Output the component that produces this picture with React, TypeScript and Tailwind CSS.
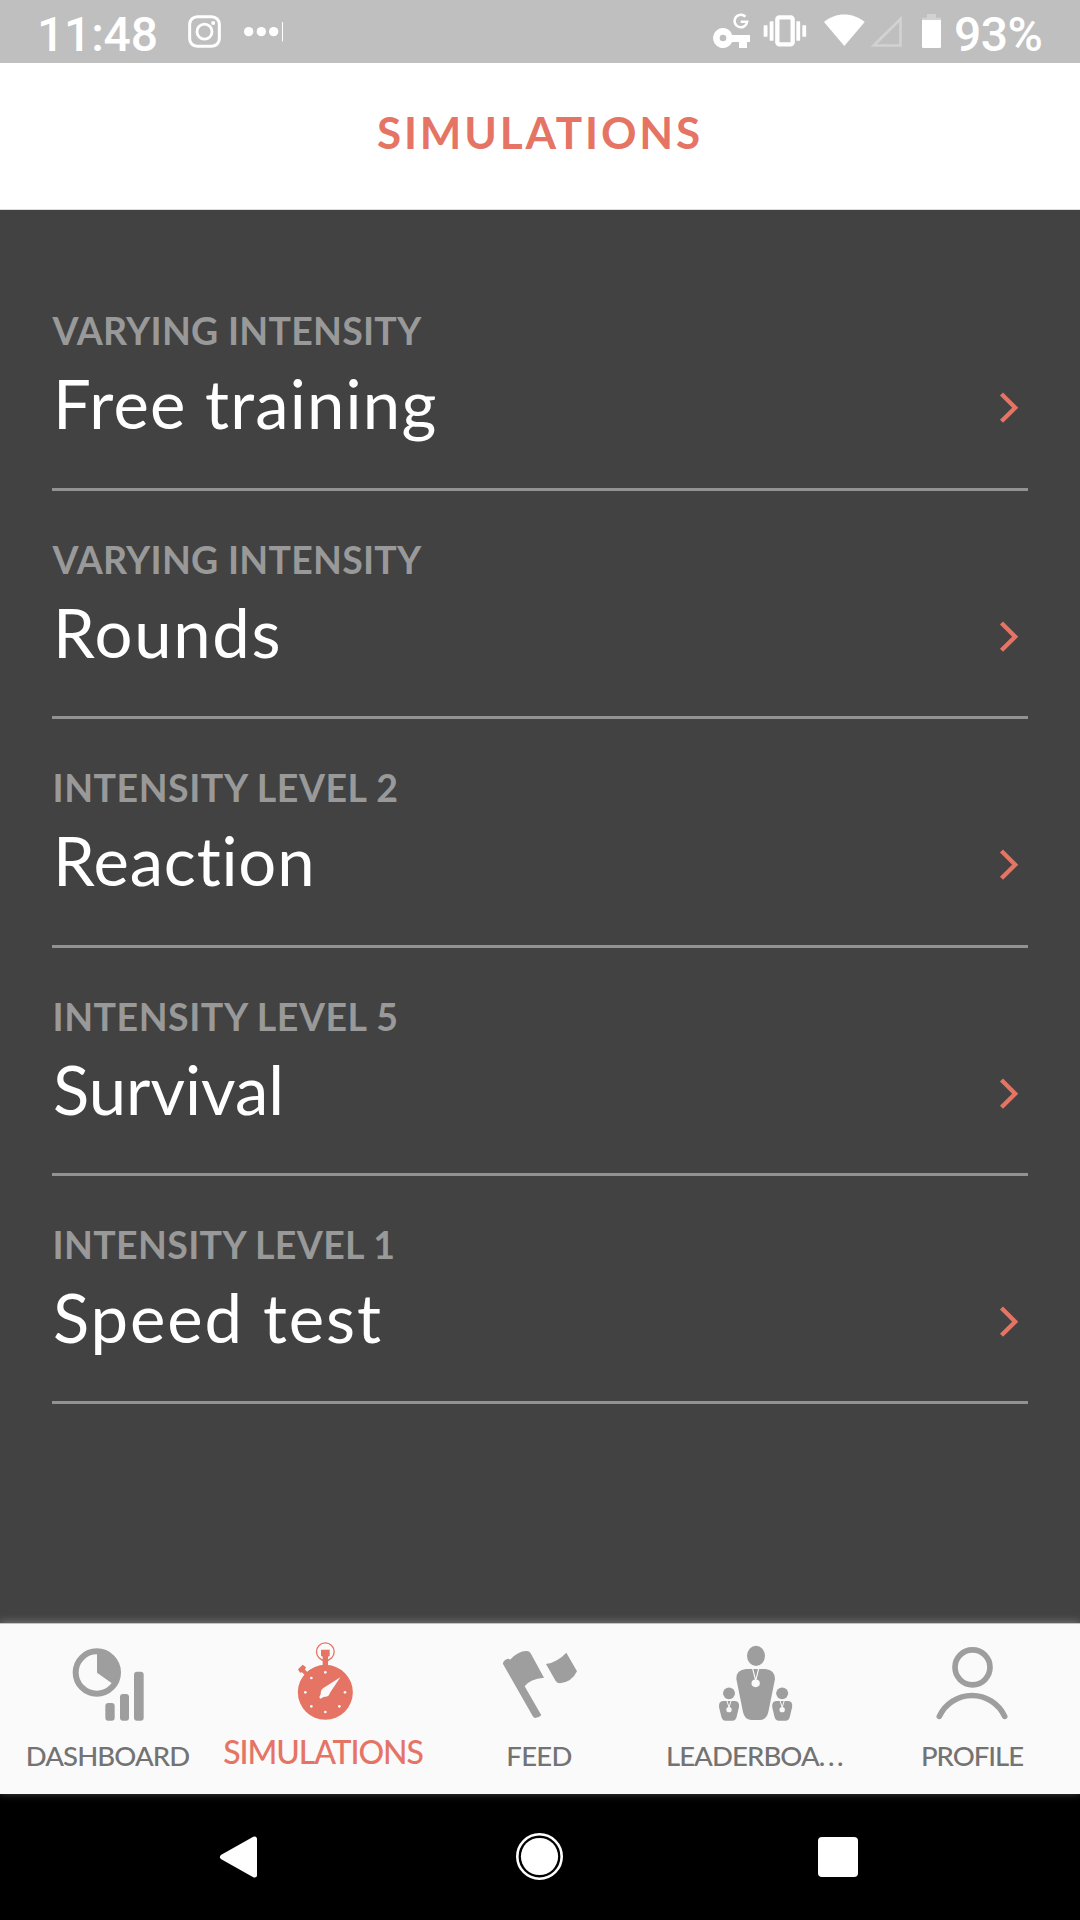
import type { ReactNode } from 'react'

type Simulation = {
  level: string
  levelClass: string
  name: string
  nameClass: string
}

const simulations: Simulation[] = [
  { level: 'VARYING INTENSITY', levelClass: 'tracking-[0.25px]', name: 'Free training', nameClass: 'tracking-[1.2px]' },
  { level: 'VARYING INTENSITY', levelClass: 'tracking-[0.25px]', name: 'Rounds', nameClass: 'tracking-[1.7px]' },
  { level: 'INTENSITY LEVEL 2', levelClass: 'tracking-[0.53px]', name: 'Reaction', nameClass: 'tracking-[0.8px]' },
  { level: 'INTENSITY LEVEL 5', levelClass: 'tracking-[0.53px]', name: 'Survival', nameClass: 'tracking-[0px]' },
  { level: 'INTENSITY LEVEL 1', levelClass: 'tracking-[0.35px]', name: 'Speed test', nameClass: 'tracking-[1.9px]' },
]

function StatusBar() {
  return (
    <div className="flex h-[63px] items-start bg-[#bfbfbf] font-['Roboto',sans-serif] text-white">
      <span className="ml-[37px] mt-[7px] w-[151px] text-[48px] leading-[56px] font-medium tracking-[-0.2px]">11:48</span>
      {/* instagram */}
      <svg className="mt-[15px] h-[33px] w-[33px]" viewBox="0 0 99 99" fill="none" stroke="currentColor">
        <rect x="5" y="5" width="89" height="89" rx="23" strokeWidth="9" />
        <circle cx="49.5" cy="50" r="22.5" strokeWidth="8.5" />
        <circle cx="75.5" cy="24" r="6" fill="currentColor" stroke="none" />
      </svg>
      {/* more notifications */}
      <svg className="mt-[20px] ml-[21px] h-[24px] w-[44px]" viewBox="0 0 132 72" fill="currentColor">
        <circle cx="20" cy="35" r="14" />
        <circle cx="58" cy="35" r="14" />
        <circle cx="95" cy="35" r="14" />
        <rect x="120" y="6" width="3" height="58" />
      </svg>
      {/* vpn key */}
      <svg className="mt-[11px] ml-[425px] h-[40px] w-[42px]" viewBox="93 33 126 120" fill="currentColor">
        <path
          fillRule="evenodd"
          d="M129 84a30 30 0 1 0 27.500 42H177v18h24v-18h9v-21h-53.500A30 30 0 0 0 129 84zm0 20a10 10 0 1 1 0 20 10 10 0 0 1 0-20z"
        />
        <path d="M196.500 50A19 19 0 1 0 201.500 65H182" fill="none" stroke="currentColor" strokeWidth="7.500" />
      </svg>
      {/* vibrate */}
      <svg className="mt-[11px] ml-[8px] h-[40px] w-[47px]" viewBox="243 33 141 120" fill="currentColor">
        <rect x="251" y="76" width="11.500" height="34" rx="1" />
        <rect x="269" y="64" width="11.500" height="58" rx="1" />
        <rect x="349" y="64" width="11.500" height="58" rx="1" />
        <rect x="367" y="76" width="11.500" height="34" rx="1" />
        <rect x="292" y="52" width="46" height="81" rx="6" fill="none" stroke="currentColor" strokeWidth="13" />
      </svg>
      {/* wifi */}
      <svg className="mt-[11px] ml-[15px] h-[40px] w-[42px]" viewBox="429 33 126 120" fill="currentColor">
        <path d="M432 66C466 36 519 36 554 66L493 138z" />
      </svg>
      {/* mobile signal */}
      <svg className="mt-[11px] ml-[4px] h-[40px] w-[34px]" viewBox="567 33 102 120" fill="none" stroke="#d2d2d2" strokeWidth="8">
        <path d="M581 136.500L661.500 57V136.500z" />
      </svg>
      {/* battery */}
      <svg className="mt-[11px] ml-[18px] h-[40px] w-[22px]" viewBox="723 33 66 120">
        <path d="M741 42h27v11h15v8h-57v-8h15z" fill="#d2d2d2" />
        <path d="M726 60h57v80q0 4-4 4h-49q-4 0-4-4z" fill="#fff" />
      </svg>
      <span className="ml-[11px] mt-[7px] text-[48px] leading-[56px] font-medium tracking-[-0.5px]">93%</span>
    </div>
  )
}

function SimulationRow({ item }: { item: Simulation }) {
  return (
    <li className="flex h-[228.4px] items-start justify-between border-b-3 border-[#929292]">
      <div className="flex flex-col">
        <span className={`mt-[45px] ml-[0.500px] text-[37.500px] leading-[48px] font-bold whitespace-nowrap text-[#999999] ${item.levelClass}`}>
          {item.level}
        </span>
        <span className={`mt-[8px] ml-[1px] text-[67px] leading-[80px] whitespace-nowrap text-white ${item.nameClass}`}>
          {item.name}
        </span>
      </div>
      <svg className="mt-[128px] mr-[6px] h-[36px] w-[26px]" viewBox="0 0 78 108" fill="none" stroke="#e57465" strokeWidth="13">
        <path d="M16.500 12L57.500 53L16.500 94" />
      </svg>
    </li>
  )
}

// Icons are drawn on a 264 unit grid
function TabIcon({ viewBox, children }: { viewBox: string; children: ReactNode }) {
  return (
    <svg className="mt-[12px] h-[88px] w-[88px] shrink-0" viewBox={viewBox} fill="#9e9e9e">
      {children}
    </svg>
  )
}

function MedalPerson() {
  return (
    <>
      <ellipse cx="237" cy="250" rx="18" ry="17.500" />
      <path d="M219 273H255Q269 273 267 291L260 320Q257 332 247 332H227Q217 332 214 320L207 291Q206 273 219 273z" />
      <path d="M231 273L237 292L243 273" fill="none" stroke="#fafafa" strokeWidth="3" />
      <circle cx="237" cy="299" r="8" fill="#fafafa" />
    </>
  )
}

function Tab({ label, labelClass, children }: { label: ReactNode; labelClass: string; children: ReactNode }) {
  return (
    <div className="flex w-[216px] flex-col items-center">
      {children}
      <span className={`font-medium whitespace-nowrap ${labelClass}`}>{label}</span>
    </div>
  )
}

function TabBar() {
  return (
    <div className="relative flex h-[171px] border-t border-[#c4c4c4] bg-[#fafafa] shadow-[0_-1px_8px_rgba(190,190,190,0.45)]">
      <Tab label="DASHBOARD" labelClass="mt-[14px] mr-[1px] text-[27.500px] leading-[36px] text-[#737373] tracking-[-0.9px]">
        <TabIcon viewBox="192 78 264 264">
          <circle cx="290.500" cy="187.500" r="63.500" fill="none" stroke="#9e9e9e" strokeWidth="18" />
          <path d="M291 188V125A63 63 0 0 1 342 224z" />
          <rect x="316" y="279" width="28" height="53" rx="9" />
          <rect x="360" y="252" width="27" height="80" rx="9" />
          <rect x="402" y="185" width="29" height="147" rx="9" />
        </TabIcon>
      </Tab>
      <Tab label="SIMULATIONS" labelClass="mt-[8px] mr-[2px] text-[32px] leading-[40px] text-[#e57465] tracking-[-1.1px]">
        <TabIcon viewBox="210 78 264 264">
          <g fill="#e57465">
            <circle cx="346" cy="247" r="82.500" />
            <circle cx="346" cy="125" r="26.500" fill="none" stroke="#e57465" strokeWidth="4" />
            <path d="M333 119H359V137L354 140V168H338V140L333 137z" />
            <path d="M264 178L278 164L288 172L285 179L296 190L287 198L276 187L270 188z" />
          </g>
          <g fill="#fafafa">
            <path d="M391 202L357 253L331 266L328 262L339 235z" />
            <circle cx="346" cy="247" r="13.500" />
            <circle cx="346" cy="187" r="4" />
            <circle cx="304" cy="204" r="4" />
            <circle cx="286" cy="247" r="4" />
            <circle cx="304" cy="289" r="4" />
            <circle cx="346" cy="306" r="4" />
            <circle cx="388" cy="289" r="4" />
            <circle cx="405" cy="247" r="4" />
          </g>
        </TabIcon>
      </Tab>
      <Tab label="FEED" labelClass="mt-[14px] mr-[2px] text-[27.500px] leading-[36px] text-[#737373] tracking-[-0.7px]">
        <TabIcon viewBox="78 78 264 264">
          <path d="M99 162Q98 152 112 147Q117 145 120 149Q146 122 170 123Q178 123 182 130L222 203Q180 206 164 229L214 316Q206 324 195 324Q191 323 188 318z" />
          <path d="M228 162Q262 157 289 128L321 184Q306 216 270 220Q262 220 257 213z" />
        </TabIcon>
      </Tab>
      <Tab
        label={
          <>
            LEADERBOA<span className="tracking-[2.6px]">...</span>
          </>
        }
        labelClass="mt-[14px] text-[27.500px] leading-[36px] text-[#737373] tracking-[-0.9px]"
      >
        <TabIcon viewBox="186 78 264 264">
          <ellipse cx="318" cy="137.500" rx="27" ry="30.500" />
          <path d="M288 177H346Q375 180 375 207L355 306Q350 329 330 330H303Q284 329 279 306L259 207Q258 180 288 177z" />
          <path d="M308 176L317 212L326 176" fill="none" stroke="#fafafa" strokeWidth="3.500" />
          <ellipse cx="317" cy="220" rx="12.500" ry="11.500" fill="#fafafa" />
          <MedalPerson />
          <g transform="translate(159.500 0)">
            <MedalPerson />
          </g>
        </TabIcon>
      </Tab>
      <Tab label="PROFILE" labelClass="mt-[14px] text-[27.500px] leading-[36px] text-[#737373] tracking-[-1px]">
        <TabIcon viewBox="114 78 264 264">
          <g fill="none" stroke="#9e9e9e" strokeWidth="17" strokeLinecap="round">
            <circle cx="247.500" cy="172" r="52.500" />
            <path d="M148 319A108 108 0 0 1 344 319" />
          </g>
        </TabIcon>
      </Tab>
    </div>
  )
}

function NavBar() {
  return (
    <div className="flex h-[126px] items-start bg-black">
      <svg className="mt-[41px] ml-[218px] h-[44px] w-[40px]" viewBox="0 0 40 44" fill="#fff" stroke="#fff" strokeWidth="5" strokeLinejoin="round">
        <path d="M4.500 22L36.500 4V40z" />
      </svg>
      <svg className="mt-[38px] ml-[257px] h-[49px] w-[49px]" viewBox="0 0 49 49">
        <circle cx="24.500" cy="24.500" r="22.200" fill="none" stroke="#fff" strokeWidth="2.600" />
        <circle cx="24.500" cy="24.500" r="18.600" fill="#fff" />
      </svg>
      <div className="mt-[43px] ml-[254px] h-[40px] w-[40px] rounded-[4px] bg-white" />
    </div>
  )
}

export default function App() {
  return (
    <div className="flex h-[1920px] w-[1080px] flex-col overflow-hidden bg-[#424242] font-['Lato',sans-serif]">
      <StatusBar />
      <header className="flex h-[147px] justify-center border-b border-[#dcdcdc] bg-white">
        <h1 className="mt-[39px] text-[44px] leading-[60px] font-bold tracking-[2.85px] text-[#e57465]">SIMULATIONS</h1>
      </header>
      <ul className="mx-[52px] flex-1 pt-[52.400px]">
        {simulations.map((item) => (
          <SimulationRow key={item.name} item={item} />
        ))}
      </ul>
      <TabBar />
      <NavBar />
    </div>
  )
}
